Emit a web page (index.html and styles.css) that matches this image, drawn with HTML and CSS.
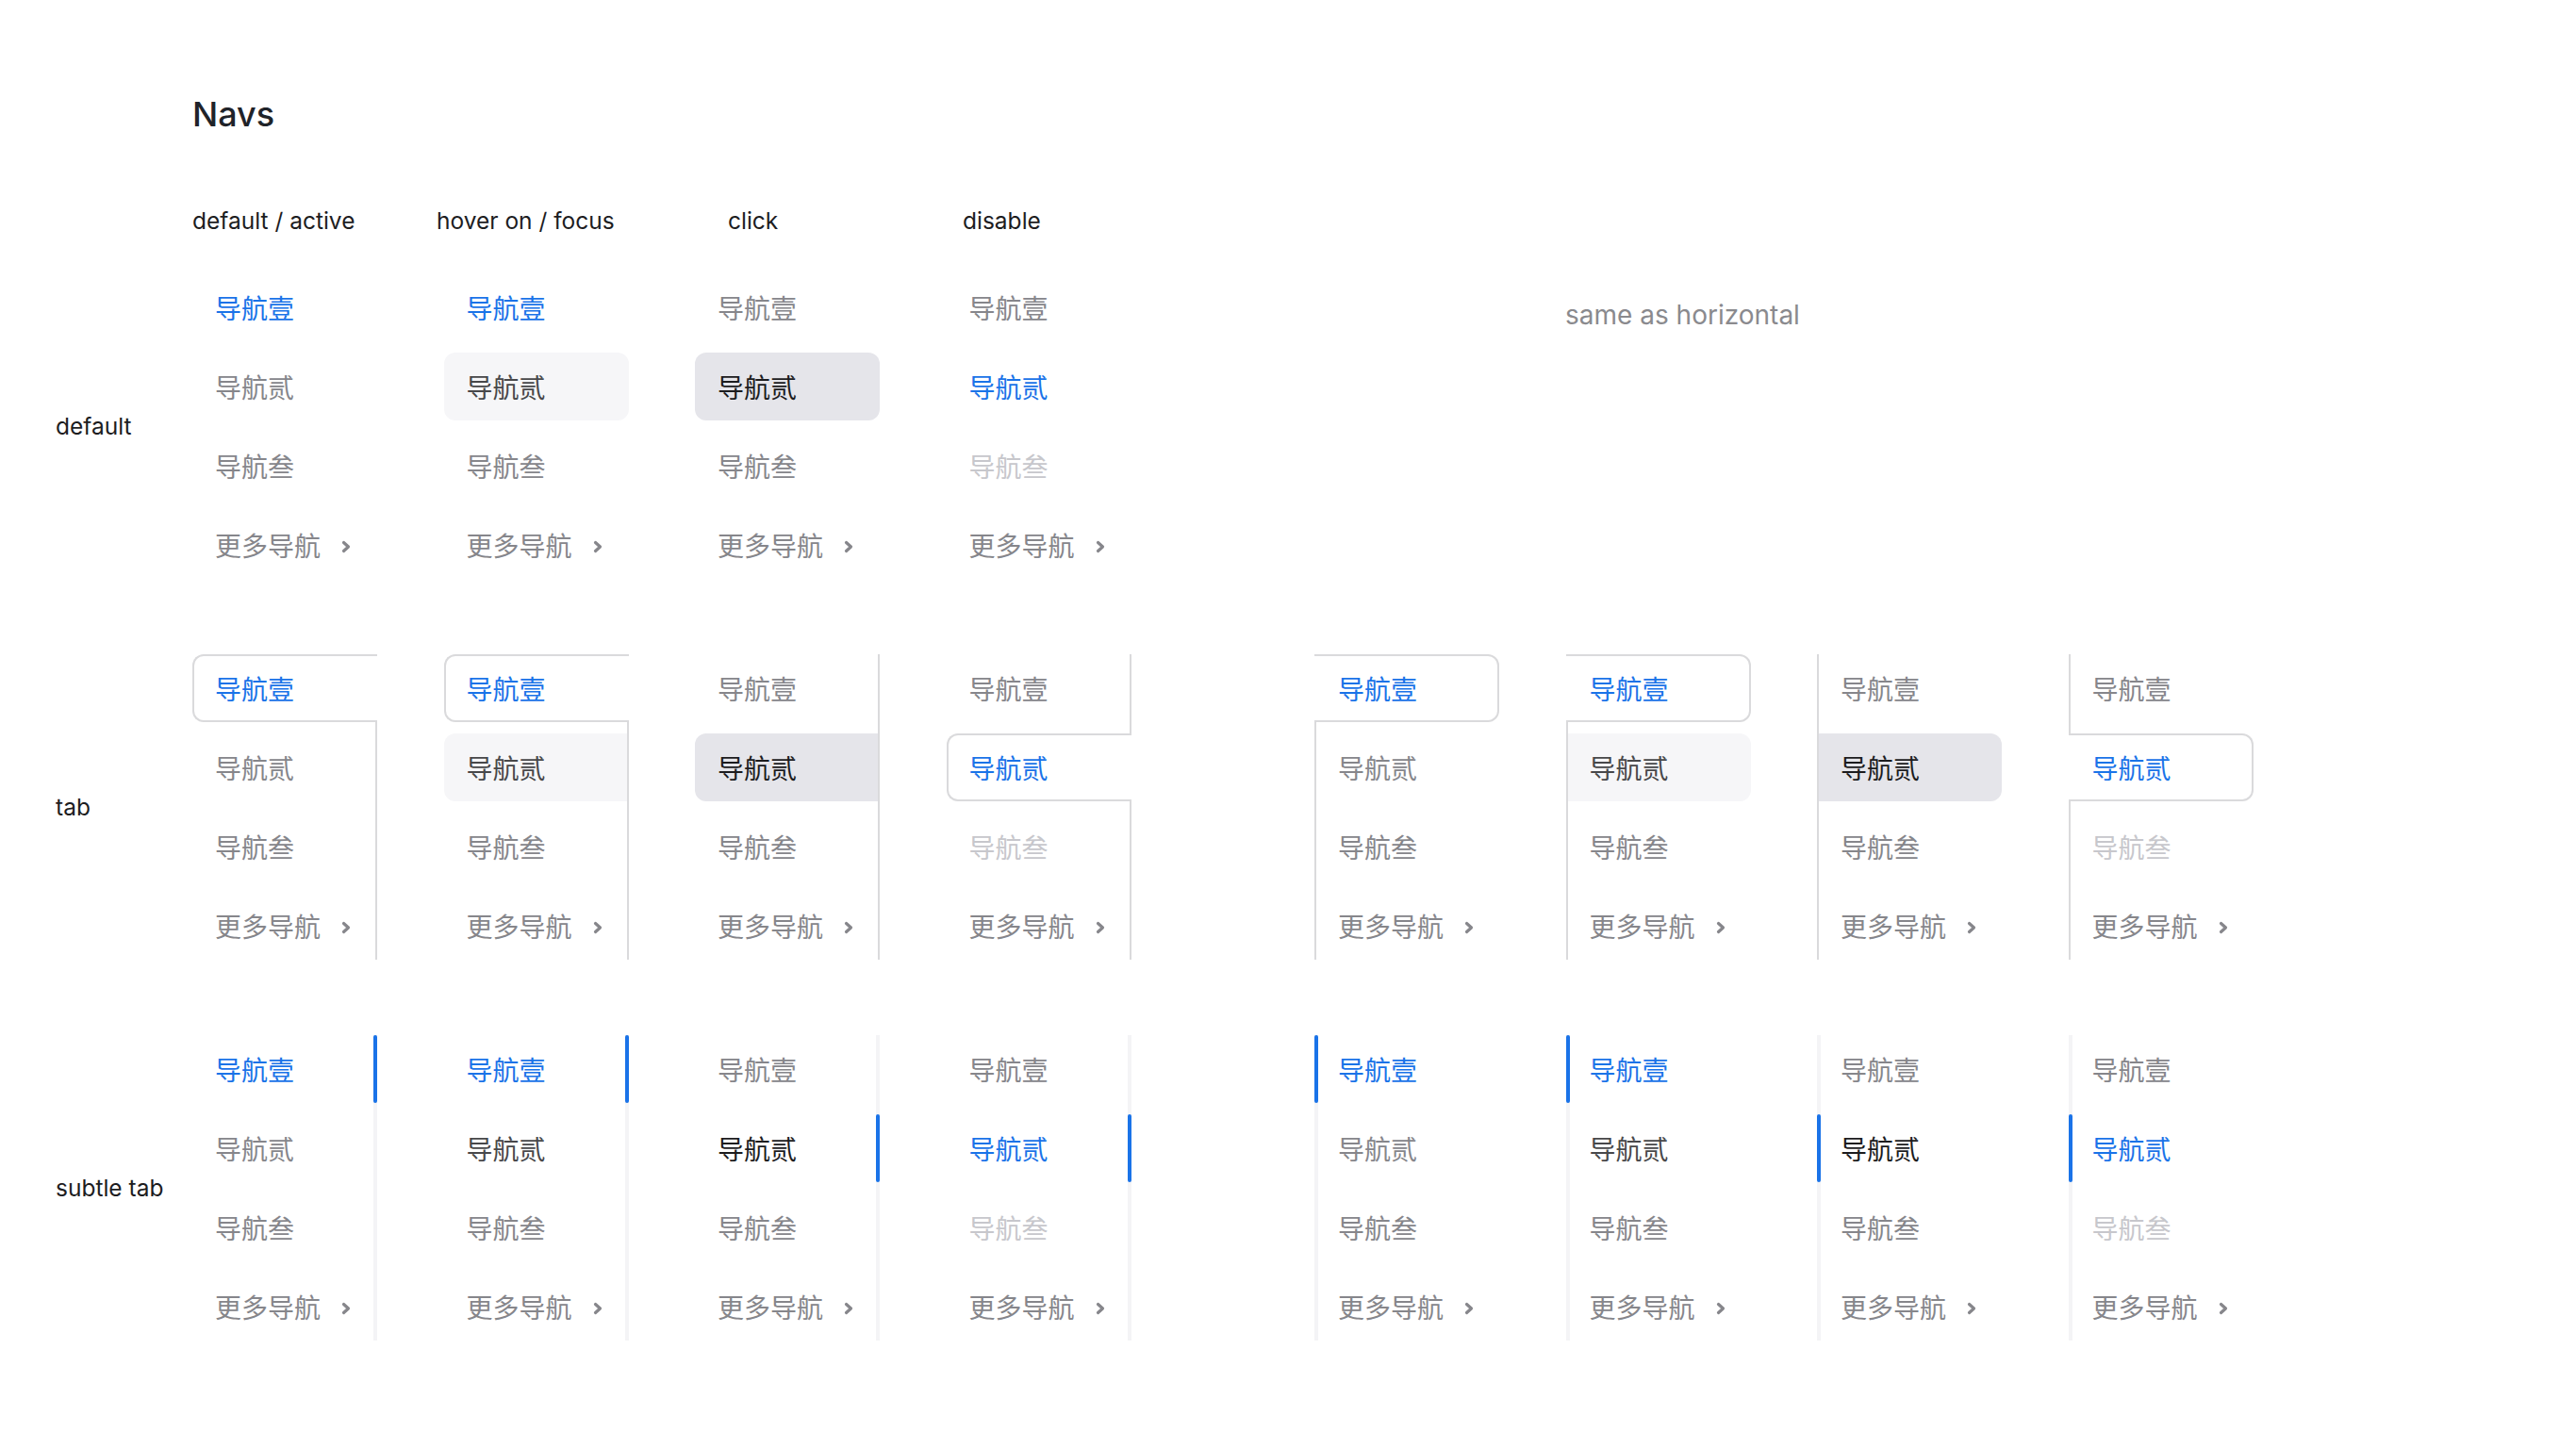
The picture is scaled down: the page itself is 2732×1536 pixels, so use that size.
FILE: index.html
```html
<!DOCTYPE html>
<html lang="zh">
<head>
<meta charset="utf-8">
<title>Navs</title>
<link rel="stylesheet" href="styles.css">
</head>
<body>
<main class="page">
  <h1 class="title">Navs</h1>

  <div class="heads">
    <span class="head">default / active</span>
    <span class="head">hover on / focus</span>
    <span class="head">click</span>
    <span class="head">disable</span>
  </div>

  <!-- default -->
  <section class="section">
    <div class="label">default</div>
    <div class="group">
      <div class="col plain">
        <div class="item active">导航壹</div>
        <div class="item">导航贰</div>
        <div class="item">导航叁</div>
        <div class="item more">更多导航<svg class="chev" viewBox="0 0 12 14"><path d="M3.5 2.5 L8.5 7 L3.5 11.5"/></svg></div>
      </div>
      <div class="col plain">
        <div class="item active">导航壹</div>
        <div class="item hover">导航贰</div>
        <div class="item">导航叁</div>
        <div class="item more">更多导航<svg class="chev" viewBox="0 0 12 14"><path d="M3.5 2.5 L8.5 7 L3.5 11.5"/></svg></div>
      </div>
      <div class="col plain">
        <div class="item">导航壹</div>
        <div class="item pressed">导航贰</div>
        <div class="item">导航叁</div>
        <div class="item more">更多导航<svg class="chev" viewBox="0 0 12 14"><path d="M3.5 2.5 L8.5 7 L3.5 11.5"/></svg></div>
      </div>
      <div class="col plain">
        <div class="item">导航壹</div>
        <div class="item active">导航贰</div>
        <div class="item disabled">导航叁</div>
        <div class="item more">更多导航<svg class="chev" viewBox="0 0 12 14"><path d="M3.5 2.5 L8.5 7 L3.5 11.5"/></svg></div>
      </div>
    </div>
    <div class="same">same as horizontal</div>
  </section>

  <!-- tab -->
  <section class="section">
    <div class="label">tab</div>
    <div class="group">
      <div class="col tab-l">
        <div class="item active">导航壹</div>
        <div class="item">导航贰</div>
        <div class="item">导航叁</div>
        <div class="item more">更多导航<svg class="chev" viewBox="0 0 12 14"><path d="M3.5 2.5 L8.5 7 L3.5 11.5"/></svg></div>
      </div>
      <div class="col tab-l">
        <div class="item active">导航壹</div>
        <div class="item hover">导航贰</div>
        <div class="item">导航叁</div>
        <div class="item more">更多导航<svg class="chev" viewBox="0 0 12 14"><path d="M3.5 2.5 L8.5 7 L3.5 11.5"/></svg></div>
      </div>
      <div class="col tab-l">
        <div class="item">导航壹</div>
        <div class="item pressed">导航贰</div>
        <div class="item">导航叁</div>
        <div class="item more">更多导航<svg class="chev" viewBox="0 0 12 14"><path d="M3.5 2.5 L8.5 7 L3.5 11.5"/></svg></div>
      </div>
      <div class="col tab-l">
        <div class="item">导航壹</div>
        <div class="item active">导航贰</div>
        <div class="item disabled">导航叁</div>
        <div class="item more">更多导航<svg class="chev" viewBox="0 0 12 14"><path d="M3.5 2.5 L8.5 7 L3.5 11.5"/></svg></div>
      </div>
    </div>
    <div class="group group-right">
      <div class="col tab-r">
        <div class="item active">导航壹</div>
        <div class="item">导航贰</div>
        <div class="item">导航叁</div>
        <div class="item more">更多导航<svg class="chev" viewBox="0 0 12 14"><path d="M3.5 2.5 L8.5 7 L3.5 11.5"/></svg></div>
      </div>
      <div class="col tab-r">
        <div class="item active">导航壹</div>
        <div class="item hover">导航贰</div>
        <div class="item">导航叁</div>
        <div class="item more">更多导航<svg class="chev" viewBox="0 0 12 14"><path d="M3.5 2.5 L8.5 7 L3.5 11.5"/></svg></div>
      </div>
      <div class="col tab-r">
        <div class="item">导航壹</div>
        <div class="item pressed">导航贰</div>
        <div class="item">导航叁</div>
        <div class="item more">更多导航<svg class="chev" viewBox="0 0 12 14"><path d="M3.5 2.5 L8.5 7 L3.5 11.5"/></svg></div>
      </div>
      <div class="col tab-r">
        <div class="item">导航壹</div>
        <div class="item active">导航贰</div>
        <div class="item disabled">导航叁</div>
        <div class="item more">更多导航<svg class="chev" viewBox="0 0 12 14"><path d="M3.5 2.5 L8.5 7 L3.5 11.5"/></svg></div>
      </div>
    </div>
  </section>

  <!-- subtle tab -->
  <section class="section">
    <div class="label">subtle tab</div>
    <div class="group">
      <div class="col sub-l">
        <div class="item active bar">导航壹</div>
        <div class="item">导航贰</div>
        <div class="item">导航叁</div>
        <div class="item more">更多导航<svg class="chev" viewBox="0 0 12 14"><path d="M3.5 2.5 L8.5 7 L3.5 11.5"/></svg></div>
      </div>
      <div class="col sub-l">
        <div class="item active bar">导航壹</div>
        <div class="item dark">导航贰</div>
        <div class="item">导航叁</div>
        <div class="item more">更多导航<svg class="chev" viewBox="0 0 12 14"><path d="M3.5 2.5 L8.5 7 L3.5 11.5"/></svg></div>
      </div>
      <div class="col sub-l">
        <div class="item">导航壹</div>
        <div class="item darker bar">导航贰</div>
        <div class="item">导航叁</div>
        <div class="item more">更多导航<svg class="chev" viewBox="0 0 12 14"><path d="M3.5 2.5 L8.5 7 L3.5 11.5"/></svg></div>
      </div>
      <div class="col sub-l">
        <div class="item">导航壹</div>
        <div class="item active bar">导航贰</div>
        <div class="item disabled">导航叁</div>
        <div class="item more">更多导航<svg class="chev" viewBox="0 0 12 14"><path d="M3.5 2.5 L8.5 7 L3.5 11.5"/></svg></div>
      </div>
    </div>
    <div class="group group-right">
      <div class="col sub-r">
        <div class="item active bar">导航壹</div>
        <div class="item">导航贰</div>
        <div class="item">导航叁</div>
        <div class="item more">更多导航<svg class="chev" viewBox="0 0 12 14"><path d="M3.5 2.5 L8.5 7 L3.5 11.5"/></svg></div>
      </div>
      <div class="col sub-r">
        <div class="item active bar">导航壹</div>
        <div class="item dark">导航贰</div>
        <div class="item">导航叁</div>
        <div class="item more">更多导航<svg class="chev" viewBox="0 0 12 14"><path d="M3.5 2.5 L8.5 7 L3.5 11.5"/></svg></div>
      </div>
      <div class="col sub-r">
        <div class="item">导航壹</div>
        <div class="item darker bar">导航贰</div>
        <div class="item">导航叁</div>
        <div class="item more">更多导航<svg class="chev" viewBox="0 0 12 14"><path d="M3.5 2.5 L8.5 7 L3.5 11.5"/></svg></div>
      </div>
      <div class="col sub-r">
        <div class="item">导航壹</div>
        <div class="item active bar">导航贰</div>
        <div class="item disabled">导航叁</div>
        <div class="item more">更多导航<svg class="chev" viewBox="0 0 12 14"><path d="M3.5 2.5 L8.5 7 L3.5 11.5"/></svg></div>
      </div>
    </div>
  </section>
</main>
</body>
</html>
```

FILE: styles.css
```css
* { box-sizing: border-box; }

html, body {
  margin: 0;
  padding: 0;
  background: #ffffff;
}

body {
  font-family: "Inter", "Noto Sans CJK SC", "Noto Sans", sans-serif;
  color: #1d1d1f;
}

.page {
  padding: 103px 0 0 59px;
}

.title {
  margin: 0 0 0 145px;
  font-size: 36px;
  line-height: 36px;
  font-weight: 500;
  color: #1f2329;
}

.heads {
  display: grid;
  grid-template-columns: 259px 309px 249px auto;
  margin: 83px 0 0 145px;
  font-size: 24.5px;
  line-height: 24px;
  color: #1d1d1f;
}

.section {
  display: flex;
  align-items: center;
  margin-top: 80px;
}

.heads + .section {
  margin-top: 44px;
}

.label {
  width: 145px;
  flex: none;
  font-size: 24.5px;
  line-height: 24px;
  color: #1d1d1f;
}

.group {
  display: flex;
  gap: 70.5px;
}

.group-right {
  margin-left: 194.5px;
}

.col {
  width: 196px;
  display: flex;
  flex-direction: column;
  gap: 12px;
}

.item {
  height: 72px;
  display: flex;
  align-items: center;
  padding-left: 24px;
  padding-top: 3px;
  font-size: 28px;
  line-height: 28px;
  color: #86868b;
  white-space: nowrap;
  position: relative;
}

.item.active { color: #1a73e8; }
.item.disabled { color: #c7c7cc; }
.item.dark { color: #48484a; }
.item.darker { color: #1c1c1e; }

.item.hover {
  background: #f6f6f8;
  color: #48484a;
}

.item.pressed {
  background: #e5e5ea;
  color: #1c1c1e;
}

.chev {
  width: 12px;
  height: 14px;
  margin-left: 21px;
  fill: none;
  stroke: #86868b;
  stroke-width: 3.2;
  stroke-linecap: round;
  stroke-linejoin: round;
}

/* plain */
.plain .item { border-radius: 12px; }

/* tab, line on the right */
.tab-l {
  border-right: 2px solid #dadadc;
}
.tab-l .item { border-radius: 12px 0 0 12px; }
.tab-l .item.active {
  background: #ffffff;
  border: 2px solid #dadadc;
  border-right: none;
  margin-right: -2px;
  padding-left: 22px;
}

/* tab, line on the left */
.tab-r {
  border-left: 2px solid #dadadc;
}
.tab-r .item {
  border-radius: 0 12px 12px 0;
  padding-left: 23px;
}
.tab-r .item.active {
  background: #ffffff;
  border: 2px solid #dadadc;
  border-left: none;
  margin-left: -2px;
  padding-left: 25px;
}

/* subtle tab */
.sub-l { border-right: 4px solid #f4f4f6; }
.sub-r { border-left: 4px solid #f4f4f6; }
.sub-r .item { padding-left: 21px; }

.item.bar::after {
  content: "";
  position: absolute;
  top: 0;
  bottom: 0;
  width: 4px;
  border-radius: 2px;
  background: #1a73e8;
}
.sub-l .item.bar::after { right: -4px; }
.sub-r .item.bar::after { left: -4px; }

.same {
  align-self: flex-start;
  margin: 30px 0 0 460.5px;
  font-size: 28px;
  line-height: 28px;
  color: #8a8a8e;
  white-space: nowrap;
}
```
